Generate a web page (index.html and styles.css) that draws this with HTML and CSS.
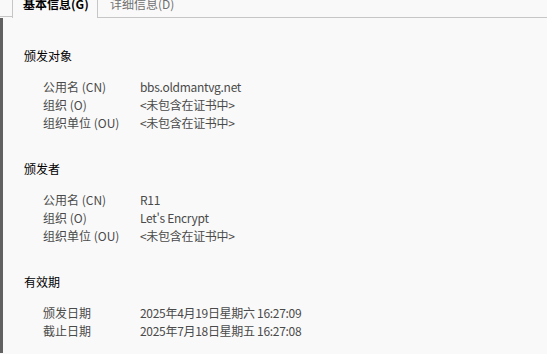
FILE: index.html
```html
<!DOCTYPE html>
<html lang="zh-CN">
<head>
<meta charset="utf-8">
<title>证书</title>
<link rel="stylesheet" href="styles.css">
</head>
<body>
<div class="tabs">
  <div class="tab-lead"></div>
  <div class="tab tab-active">基本信息(G)</div>
  <div class="tab tab-rest">详细信息(D)</div>
</div>
<div class="pane">
  <div class="edge"></div>
  <div class="content">
    <section class="section">
      <h2 class="section-title">颁发对象</h2>
      <div class="rows">
        <div class="label">公用名 (CN)</div><div class="value">bbs.oldmantvg.net</div>
        <div class="label">组织 (O)</div><div class="value">&lt;未包含在证书中&gt;</div>
        <div class="label">组织单位 (OU)</div><div class="value">&lt;未包含在证书中&gt;</div>
      </div>
    </section>
    <section class="section">
      <h2 class="section-title">颁发者</h2>
      <div class="rows">
        <div class="label">公用名 (CN)</div><div class="value">R11</div>
        <div class="label">组织 (O)</div><div class="value">Let's Encrypt</div>
        <div class="label">组织单位 (OU)</div><div class="value">&lt;未包含在证书中&gt;</div>
      </div>
    </section>
    <section class="section">
      <h2 class="section-title">有效期</h2>
      <div class="rows">
        <div class="label">颁发日期</div><div class="value">2025年4月19日星期六 16:27:09</div>
        <div class="label">截止日期</div><div class="value">2025年7月18日星期五 16:27:08</div>
      </div>
    </section>
  </div>
</div>
</body>
</html>
```
FILE: styles.css
```css
html, body {
  margin: 0;
  padding: 0;
  background: #f9f9f9;
  overflow: hidden;
}
body {
  font-family: "Noto Sans CJK SC", "Noto Sans", sans-serif;
  font-size: 12px;
  line-height: 18px;
  color: #4a4a4a;
  width: 547px;
  height: 354px;
}
.tabs {
  display: flex;
  height: 24px;
  margin-top: -7px;
}
.tab-lead {
  width: 12px;
  border-bottom: 1px solid #c6c6c6;
}
.tab {
  box-sizing: border-box;
  height: 25px;
  padding-top: 2px;
  white-space: nowrap;
}
.tab-active {
  width: 86px;
  padding-left: 10px;
  border-left: 1px solid #c6c6c6;
  border-right: 1px solid #c6c6c6;
  font-weight: bold;
  color: #000;
}
.tab-rest {
  flex: 1;
  padding-left: 12px;
  border-bottom: 1px solid #c6c6c6;
  color: #707070;
}
.pane {
  display: flex;
  height: 336px;
}
.edge {
  width: 3px;
  margin-top: 1px;
  background: #616161;
}
.content {
  flex: 1;
  padding: 30px 0 0 21px;
}
.section + .section {
  margin-top: 28.5px;
}
.section-title {
  margin: 0 0 12.5px;
  font-size: 12px;
  font-weight: normal;
  line-height: 18px;
  color: #000;
}
.rows {
  display: grid;
  grid-template-columns: 97px 1fr;
  padding-left: 19px;
  line-height: 18px;
}
.label, .value {
  white-space: nowrap;
}
.value {
  letter-spacing: -0.3px;
}
```
